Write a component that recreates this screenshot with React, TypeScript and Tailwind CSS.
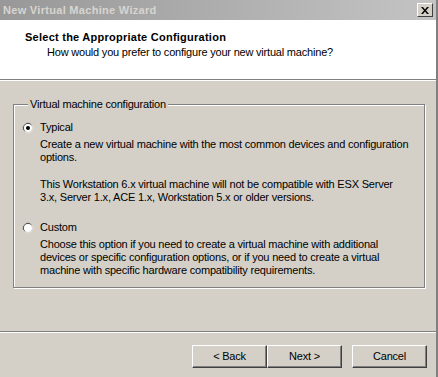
import React from "react";

const font = { fontFamily: "Tahoma, 'Liberation Sans', Arial, sans-serif" };

function Radio({ checked }: { checked?: boolean }) {
	return (
		<svg width="12" height="12" viewBox="0 0 12 12" className="shrink-0">
			<path d="M8 1.5A5 5 0 0 0 1.5 8" stroke="#808080" fill="none" />
			<path d="M9.5 3A4.2 4.2 0 0 0 3 9.3" stroke="#404040" fill="none" />
			<circle cx="6" cy="6" r="4" fill="#ffffff" />
			<path d="M10.5 4A5 5 0 0 1 4 10.5" stroke="#ffffff" fill="none" />
			<path d="M9.3 3.2A4.2 4.2 0 0 1 3.2 9.3" stroke="#d4d0c8" fill="none" />
			{checked && <circle cx="6" cy="6" r="2" fill="#000000" />}
		</svg>
	);
}

function Button({ children, gap }: { children: React.ReactNode; gap?: boolean }) {
	return (
		<button
			className={
				"w-[75px] h-[23px] bg-[#d4d0c8] text-[11px] tracking-[-0.2px] text-black border border-t-white border-l-white border-r-[#404040] border-b-[#404040] shadow-[inset_-1px_-1px_0_#808080]" +
				(gap ? " ml-[10px]" : "")
			}
		>
			{children}
		</button>
	);
}

export default function App() {
	return (
		<div
			className="w-[438px] h-[377px] bg-[#d4d0c8] flex flex-col overflow-hidden border-r-2 border-r-[#808080] text-black"
			style={font}
		>
			<div className="h-[20px] flex items-center pl-[3px] pr-[3px] bg-gradient-to-r from-[#989898] to-[#c4c4c4]">
				<span className="text-[11px] font-bold tracking-[0.3px] text-[#d8d5cf] flex-1">New Virtual Machine Wizard</span>
				<div className="w-[16px] h-[14px] bg-[#d4d0c8] border border-t-white border-l-white border-r-[#404040] border-b-[#404040] flex items-center justify-center">
					<svg width="8" height="7" viewBox="0 0 8 7">
						<path d="M0 0h2l2 2.5L6 0h2L5 3.5 8 7H6L4 4.5 2 7H0l3-3.5z" fill="#000" />
					</svg>
				</div>
			</div>

			<div className="h-[60px] bg-white pt-[11px] border-b border-b-[#808080] shadow-[0_1px_0_#ffffff]">
				<div className="pl-[25px] text-[11px] font-bold tracking-[0.25px] leading-[13px]">
					Select the Appropriate Configuration
				</div>
				<div className="pl-[47px] text-[11px] tracking-[-0.2px] leading-[13px] mt-[2px]">
					How would you prefer to configure your new virtual machine?
				</div>
			</div>

			<fieldset className="mt-[18px] ml-[13px] mr-[11px] h-[190px] border border-[#808080] shadow-[inset_1px_1px_0_#ffffff,1px_1px_0_#ffffff] px-[8px] pb-[10px] text-[11px] tracking-[-0.2px] leading-[13px] whitespace-nowrap">
				<legend className="ml-[6px] px-[2px] bg-[#d4d0c8] relative">Virtual machine configuration</legend>
				<div className="flex items-center gap-[6px] mt-[10px]">
					<Radio checked />
					<span>Typical</span>
				</div>
				<div className="pl-[18px] mt-[4px]">
					<p>
						Create a new virtual machine with the most common devices and configuration
						<br />
						options.
					</p>
					<p className="mt-[14px]">
						This Workstation 6.x virtual machine will not be compatible with ESX Server
						<br />
						3.x, Server 1.x, ACE 1.x, Workstation 5.x or older versions.
					</p>
				</div>
				<div className="flex items-center gap-[6px] mt-[17px]">
					<Radio />
					<span>Custom</span>
				</div>
				<div className="pl-[18px] mt-[4px]">
					<p>
						Choose this option if you need to create a virtual machine with additional
						<br />
						devices or specific configuration options, or if you need to create a virtual
						<br />
						machine with specific hardware compatibility requirements.
					</p>
				</div>
			</fieldset>

			<div className="mt-auto h-[2px] border-t border-t-[#808080] border-b border-b-white mb-[12px]" />
			<div className="flex justify-end pr-[9px] mb-[9px]">
				<Button>&lt; Back</Button>
				<Button>Next &gt;</Button>
				<Button gap>Cancel</Button>
			</div>
		</div>
	);
}
